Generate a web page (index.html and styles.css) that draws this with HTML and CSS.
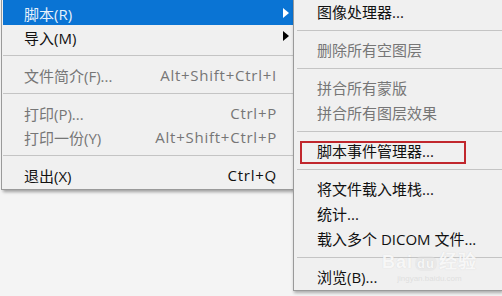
FILE: index.html
```html
<!DOCTYPE html>
<html lang="zh-CN">
<head>
<meta charset="utf-8">
<title>Menu</title>
<link rel="stylesheet" href="styles.css">
</head>
<body>
<div class="screen">
  <div class="main-menu">
    <div class="item first active"><span class="label">脚本(R)</span><span class="arrow"></span></div>
    <div class="item"><span class="label">导入(M)</span><span class="arrow"></span></div>
    <div class="sep"></div>
    <div class="item disabled"><span class="label">文件简介(F)...</span><span class="key">Alt+Shift+Ctrl+I</span></div>
    <div class="sep"></div>
    <div class="item disabled"><span class="label">打印(P)...</span><span class="key">Ctrl+P</span></div>
    <div class="item disabled"><span class="label">打印一份(Y)</span><span class="key">Alt+Shift+Ctrl+P</span></div>
    <div class="sep"></div>
    <div class="item"><span class="label">退出(X)</span><span class="key">Ctrl+Q</span></div>
  </div>
  <div class="sub-menu">
    <div class="sitem">图像处理器...</div>
    <div class="ssep"></div>
    <div class="sitem disabled">删除所有空图层</div>
    <div class="ssep"></div>
    <div class="sitem disabled">拼合所有蒙版</div>
    <div class="sitem disabled">拼合所有图层效果</div>
    <div class="ssep"></div>
    <div class="sitem marked">脚本事件管理器...<span class="annot"></span></div>
    <div class="ssep"></div>
    <div class="sitem">将文件载入堆栈...</div>
    <div class="sitem">统计...</div>
    <div class="sitem">载入多个 DICOM 文件...</div>
    <div class="ssep"></div>
    <div class="sitem">浏览(B)...</div>
    <div class="watermark"><span class="wm-main">Bai<span class="wm-du">du</span>经验</span><span class="wm-sub">jingyan.baidu.com</span></div>
  </div>
</div>
</body>
</html>
```

FILE: styles.css
```css
html, body {
  margin: 0;
  padding: 0;
  background: #f4f4f4;
}

.screen {
  width: 502px;
  height: 296px;
  display: flex;
  align-items: flex-start;
  overflow: hidden;
  font-family: "Open Sans", "Noto Sans CJK SC", sans-serif;
  font-size: 15px;
  color: #111;
}

.main-menu {
  margin-left: 1px;
  width: 292px;
  box-sizing: border-box;
  background: #f0f0f0;
  border-left: 1px solid #9a9a9a;
  border-bottom: 1px solid #9a9a9a;
  padding: 0 0 2px 1px;
  box-shadow: 2px 2px 3px rgba(0, 0, 0, 0.35);
  display: flex;
  flex-direction: column;
}

.item {
  height: 24px;
  box-sizing: border-box;
  padding: 0 4px 0 21px;
  display: flex;
  align-items: center;
  white-space: nowrap;
}

.item.first {
  height: 25px;
  padding-top: 2px;
}

.item.active {
  background: #0a74d4;
  color: #e6f1fb;
}

.item.disabled,
.sitem.disabled {
  color: #767676;
}

.label {
  flex: 0 0 auto;
}

.key {
  margin-left: auto;
  margin-right: 12px;
  letter-spacing: 0.75px;
}

.arrow {
  margin-left: auto;
  width: 0;
  height: 0;
  border-left: 6px solid #000;
  border-top: 5px solid transparent;
  border-bottom: 5px solid transparent;
  margin-top: -2px;
}

.item.active .arrow {
  border-left-color: #ffffff;
}

.sep {
  height: 1px;
  background: #c4c4c4;
  margin: 6px 0 7px 0;
}

.sub-menu {
  position: relative;
  width: 209px;
  box-sizing: border-box;
  background: #f0f0f0;
  border-left: 1px solid #9a9a9a;
  border-bottom: 1px solid #9a9a9a;
  box-shadow: 1px 2px 3px rgba(0, 0, 0, 0.3);
  display: flex;
  flex-direction: column;
}

.sitem {
  position: relative;
  height: 25px;
  box-sizing: border-box;
  padding: 0 0 2px 23px;
  display: flex;
  align-items: center;
  white-space: nowrap;
}

.ssep {
  height: 1px;
  background: #c4c4c4;
  margin: 5px 0 7px 3px;
}

.annot {
  position: absolute;
  left: 6px;
  top: 2px;
  width: 166px;
  height: 23px;
  box-sizing: border-box;
  border: 2px solid #c1272d;
}

.watermark {
  position: absolute;
  left: 88px;
  top: 252px;
  display: flex;
  flex-direction: column;
  align-items: center;
  pointer-events: none;
}

.wm-main {
  font-family: "Liberation Sans", sans-serif;
  font-size: 18px;
  font-weight: bold;
  color: rgba(252, 252, 252, 0.9);
  text-shadow: 0 0 1px rgba(150, 150, 150, 0.3);
  letter-spacing: 1px;
  line-height: 20px;
}

.wm-du {
  font-size: 13px;
  padding: 0 2px;
  margin: 0 2px;
  border-radius: 7px;
  background: rgba(225, 225, 225, 0.5);
}

.wm-sub {
  font-family: "Liberation Sans", sans-serif;
  font-size: 8px;
  color: rgba(215, 215, 215, 0.7);
  line-height: 10px;
}
```
